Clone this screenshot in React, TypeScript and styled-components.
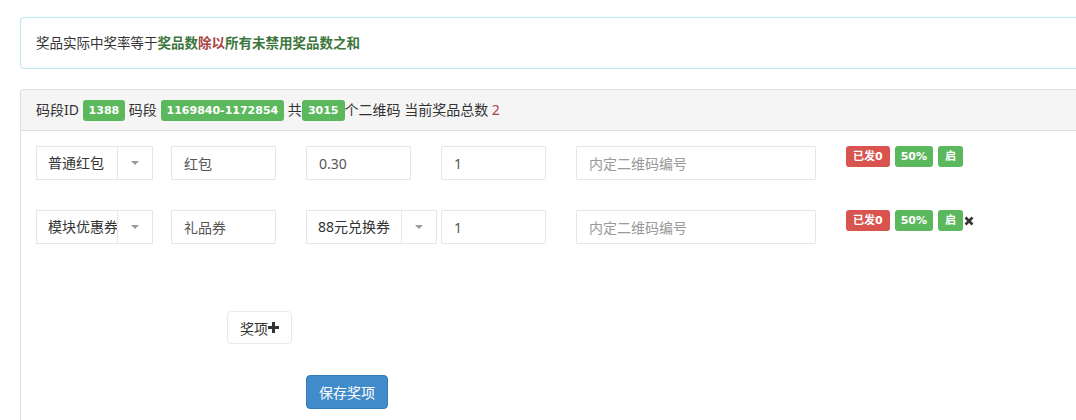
import React from "react";
import styled, { createGlobalStyle } from "styled-components";

const GlobalStyle = createGlobalStyle`
    html, body {
        margin: 0;
        padding: 0;
        overflow: hidden;
        background: #ffffff;
    }
    body {
        font-family: "Noto Sans", "Noto Sans CJK SC", sans-serif;
        font-size: 14px;
        color: #333333;
    }
`;

const Page = styled.div`
    width: 1700px;
    padding: 17px 0 0 20px;
`;

const Alert = styled.div`
    border: 1px solid #bce8f1;
    border-radius: 4px;
    padding: 15px;
    line-height: 20px;
    font-size: 13.5px;
    color: #333333;
    margin-bottom: 20px;
`;

const Success = styled.strong`
    color: #3c763d;
`;

const Danger = styled.strong`
    color: #a94442;
`;

const Panel = styled.div`
    border: 1px solid #dddddd;
    border-bottom: none;
    border-radius: 4px 4px 0 0;
    min-height: 340px;
`;

const Heading = styled.div`
    background: #f5f5f5;
    border-bottom: 1px solid #dddddd;
    border-radius: 3px 3px 0 0;
    padding: 10px 15px;
    height: 20px;
    line-height: 20px;
    font-size: 14px;
    white-space: nowrap;
`;

const Count = styled.span`
    color: #a94442;
`;

const Label = styled.span<{ $tone?: "success" | "danger"; $pad?: number }>`
    display: inline-block;
    vertical-align: top;
    height: 21px;
    line-height: 21px;
    padding: 0 ${p => p.$pad ?? 6}px;
    border-radius: 3px;
    font-family: "DejaVu Sans", "Noto Sans CJK SC", sans-serif;
    font-size: 11px;
    font-weight: bold;
    color: #ffffff;
    background: ${p => p.$tone === "danger" ? "#d9534f" : "#5cb85c"};
`;

const Body = styled.div`
    padding: 15px;
`;

const PrizeRow = styled.div`
    display: grid;
    grid-template-columns: 105px 105px 105px 105px 240px auto;
    column-gap: 30px;
    align-items: start;
    margin-bottom: 30px;
`;

const Select = styled.div<{ $width: number }>`
    display: flex;
    width: ${p => p.$width}px;
    height: 34px;
    box-sizing: border-box;
    border: 1px solid #e5e6e7;
    background: #ffffff;
`;

const SelectText = styled.div`
    flex: 1;
    padding-left: 11px;
    line-height: 32px;
    font-size: 14px;
    color: #333333;
    white-space: nowrap;
    overflow: hidden;
`;

const SelectArrow = styled.div`
    width: 34px;
    border-left: 1px solid #e5e6e7;
    display: flex;
    align-items: center;
    justify-content: center;
`;

const Caret = styled.span`
    width: 0;
    height: 0;
    border-left: 4.5px solid transparent;
    border-right: 4.5px solid transparent;
    border-top: 4px solid #999999;
`;

const Input = styled.input`
    display: block;
    width: 100%;
    height: 34px;
    box-sizing: border-box;
    border: 1px solid #e5e6e7;
    border-radius: 1px;
    padding: 6px 12px;
    font-family: "Noto Sans", "Noto Sans CJK SC", sans-serif;
    font-size: 14px;
    color: #555555;
    background: #ffffff;
    outline: none;
    &::placeholder {
        color: #999999;
    }
`;

const Badges = styled.div`
    display: flex;
    align-items: center;
    height: 21px;
    ${Label} + ${Label} {
        margin-left: 5px;
    }
`;

const RemoveIcon = styled.svg`
    width: 10px;
    height: 10px;
    margin-left: 1px;
`;

const Actions = styled.div`
    display: flex;
`;

const AddButton = styled.button`
    display: inline-flex;
    align-items: center;
    height: 33px;
    margin: 37px 0 0 191px;
    padding: 0 12px;
    border: 1px solid #e7eaec;
    border-radius: 4px;
    background: #ffffff;
    color: #333333;
    font-family: "Noto Sans", "Noto Sans CJK SC", sans-serif;
    font-size: 14px;
    cursor: pointer;
    svg {
        width: 11px;
        height: 11px;
    }
`;

const SaveButton = styled.button`
    height: 34px;
    margin: 31px 0 0 270px;
    padding: 0 12px;
    border: 1px solid #357ebd;
    border-radius: 4px;
    background: #428bca;
    color: #ffffff;
    font-family: "Noto Sans", "Noto Sans CJK SC", sans-serif;
    font-size: 14px;
    cursor: pointer;
`;

interface IPrize {
    type: string;
    typeWidth: number;
    name: string;
    value: string;
    valueSelect?: boolean;
    amount: string;
    removable?: boolean;
}

const prizes: IPrize[] = [
    { type: "普通红包", typeWidth: 117, name: "红包", value: "0.30", amount: "1" },
    { type: "模块优惠券", typeWidth: 117, name: "礼品券", value: "88元兑换券", valueSelect: true, amount: "1", removable: true },
];

const SelectBox = ({ text, width }: { text: string; width: number }) => (
    <Select $width={width}>
        <SelectText>{text}</SelectText>
        <SelectArrow><Caret /></SelectArrow>
    </Select>
);

export default function App() {
    return (
        <>
            <GlobalStyle />
            <Page>
                <Alert>
                    奖品实际中奖率等于<Success>奖品数</Success><Danger>除以</Danger><Success>所有未禁用奖品数之和</Success>
                </Alert>
                <Panel>
                    <Heading>
                        码段ID <Label>1388</Label> 码段 <Label>1169840-1172854</Label> 共<Label>3015</Label>个二维码 当前奖品总数 <Count>2</Count>
                    </Heading>
                    <Body>
                        {prizes.map((p, i) => (
                            <PrizeRow key={i}>
                                <SelectBox text={p.type} width={p.typeWidth} />
                                <Input readOnly defaultValue={p.name} />
                                {p.valueSelect ? <SelectBox text={p.value} width={131} /> : <Input readOnly defaultValue={p.value} />}
                                <Input readOnly defaultValue={p.amount} />
                                <Input readOnly placeholder="内定二维码编号" />
                                <Badges>
                                    <Label $tone="danger" $pad={7}>已发0</Label>
                                    <Label>50%</Label>
                                    <Label $pad={7}>启</Label>
                                    {p.removable && (
                                        <RemoveIcon viewBox="0 0 10 10">
                                            <path d="M1.5 1.5 L8.5 8.5 M8.5 1.5 L1.5 8.5" stroke="#333333" strokeWidth="2.6" fill="none" />
                                        </RemoveIcon>
                                    )}
                                </Badges>
                            </PrizeRow>
                        ))}
                        <Actions>
                            <AddButton>
                                奖项
                                <svg viewBox="0 0 11 11">
                                    <path d="M0 5.5 H11 M5.5 0 V11" stroke="#333333" strokeWidth="3" fill="none" />
                                </svg>
                            </AddButton>
                        </Actions>
                        <Actions>
                            <SaveButton>保存奖项</SaveButton>
                        </Actions>
                    </Body>
                </Panel>
            </Page>
        </>
    );
}
